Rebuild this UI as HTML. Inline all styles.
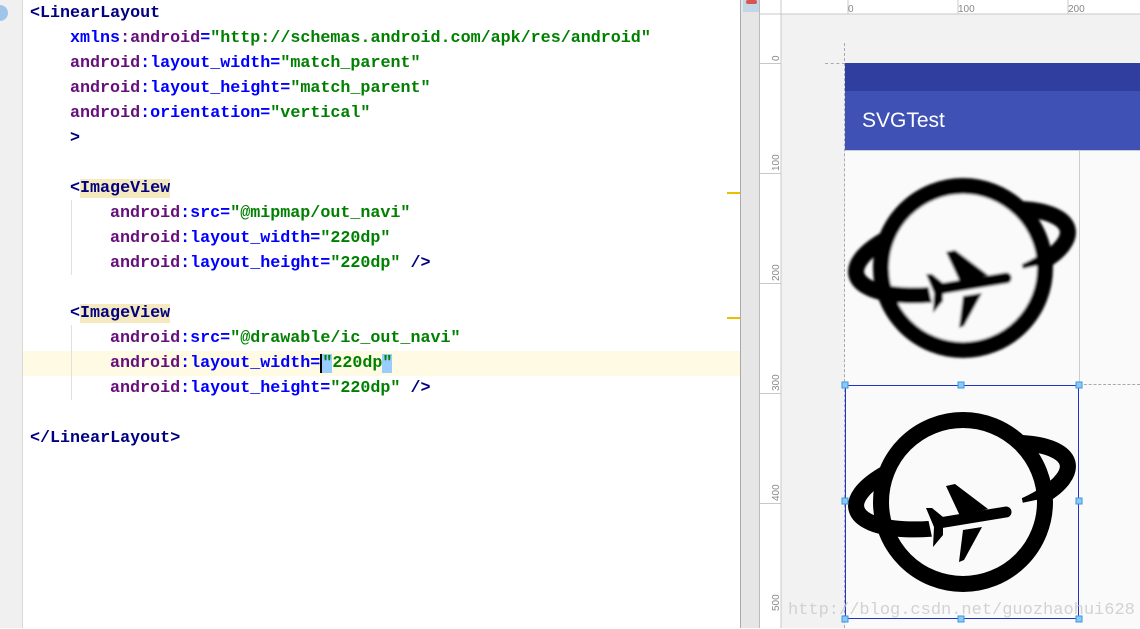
<!DOCTYPE html>
<html><head><meta charset="utf-8"><style>
body{margin:0;width:1140px;height:628px;overflow:hidden;background:#fff;position:relative;font-family:"Liberation Sans",sans-serif}
.gut{position:absolute;left:0;top:0;width:22px;height:628px;background:#f0f0f0;border-right:1px solid #d8d8d8}
.code{position:absolute;left:0;top:0;width:740px;font-family:"Liberation Mono",monospace;font-size:16.7px;font-weight:bold}
.l{position:absolute;height:25px;line-height:25px;white-space:pre}
.t{color:#000080}.p{color:#660e7a}.a{color:#0000ff}.v{color:#008000}
.hl{position:absolute;left:0;top:351px;width:740px;height:25px;background:#fffae3}
.tagbg{background:#f5e9c0}
</style></head><body>
<div class="hl"></div>
<div class="gut"></div>
<div style="position:absolute;left:0;top:5px;width:8px;height:16px;border-radius:0 8px 8px 0;background:#9fc6ea"></div>
<div style="position:absolute;left:71px;top:200px;width:1px;height:75px;background:#e0e0e0"></div>
<div style="position:absolute;left:71px;top:325px;width:1px;height:75px;background:#e0e0e0"></div>
<div class="code">
<div class="l t" style="left:30px;top:1px">&lt;LinearLayout</div>
<div class="l" style="left:70px;top:26px"><span class="a">xmlns</span><span class="p">:android</span><span class="a">=</span><span class="v">"http://schemas.android.com/apk/res/android"</span></div>
<div class="l" style="left:70px;top:51px"><span class="p">android</span><span class="a">:layout_width=</span><span class="v">"match_parent"</span></div>
<div class="l" style="left:70px;top:76px"><span class="p">android</span><span class="a">:layout_height=</span><span class="v">"match_parent"</span></div>
<div class="l" style="left:70px;top:101px"><span class="p">android</span><span class="a">:orientation=</span><span class="v">"vertical"</span></div>
<div class="l t" style="left:70px;top:126px">&gt;</div>
<div class="l t" style="left:70px;top:176px">&lt;<span class="tagbg">ImageView</span></div>
<div class="l" style="left:110px;top:201px"><span class="p">android</span><span class="a">:src=</span><span class="v">"@mipmap/out_navi"</span></div>
<div class="l" style="left:110px;top:226px"><span class="p">android</span><span class="a">:layout_width=</span><span class="v">"220dp"</span></div>
<div class="l" style="left:110px;top:251px"><span class="p">android</span><span class="a">:layout_height=</span><span class="v">"220dp"</span> <span class="t">/&gt;</span></div>
<div class="l t" style="left:70px;top:301px">&lt;<span class="tagbg">ImageView</span></div>
<div class="l" style="left:110px;top:326px"><span class="p">android</span><span class="a">:src=</span><span class="v">"@drawable/ic_out_navi"</span></div>
<div class="l" style="left:110px;top:351px"><span class="p">android</span><span class="a">:layout_width=</span><span class="v"><span style="background:#99ccff;border-left:2px solid #000">"</span>220dp<span style="background:#99ccff">"</span></span></div>
<div class="l" style="left:110px;top:376px"><span class="p">android</span><span class="a">:layout_height=</span><span class="v">"220dp"</span> <span class="t">/&gt;</span></div>
<div class="l t" style="left:30px;top:426px">&lt;/LinearLayout&gt;</div>
</div>
<div style="position:absolute;left:727px;top:192px;width:13px;height:2px;background:#e8c000"></div>
<div style="position:absolute;left:727px;top:317px;width:13px;height:2px;background:#e8c000"></div>
<div style="position:absolute;left:740px;top:0;width:20px;height:628px;background:#e6e6e6;border-left:1px solid #aaa;border-right:1px solid #bbb;box-sizing:border-box"></div>
<div style="position:absolute;left:743px;top:0;width:16px;height:12px;background:#c2d6e8"></div>
<div style="position:absolute;left:746px;top:0;width:11px;height:4px;background:#d9534f;border-radius:2px"></div>
<svg style="position:absolute;left:760px;top:0" width="380" height="628">
<rect x="0" y="0" width="380" height="628" fill="#fff"/>
<rect x="21" y="14" width="359" height="614" fill="#f2f2f2"/>
<g stroke="#c8c8c8" stroke-width="1">
<line x1="21" y1="0" x2="21" y2="628"/>
<line x1="0" y1="14" x2="380" y2="14"/>
<line x1="88" y1="0" x2="88" y2="14"/><line x1="198" y1="0" x2="198" y2="14"/><line x1="308" y1="0" x2="308" y2="14"/>
<line x1="0" y1="63.5" x2="21" y2="63.5"/><line x1="0" y1="173.5" x2="21" y2="173.5"/><line x1="0" y1="283.5" x2="21" y2="283.5"/><line x1="0" y1="393.5" x2="21" y2="393.5"/><line x1="0" y1="503.5" x2="21" y2="503.5"/>
</g>
<g font-size="10" fill="#888" font-family="Liberation Sans">
<text x="88" y="12">0</text><text x="198" y="12">100</text><text x="308" y="12">200</text>
<text transform="translate(19,61) rotate(-90)">0</text>
<text transform="translate(19,171) rotate(-90)">100</text>
<text transform="translate(19,281) rotate(-90)">200</text>
<text transform="translate(19,391) rotate(-90)">300</text>
<text transform="translate(19,501) rotate(-90)">400</text>
<text transform="translate(19,611) rotate(-90)">500</text>
</g>
</svg>
<div style="position:absolute;left:845px;top:63px;width:295px;height:28px;background:#303f9f"></div>
<div style="position:absolute;left:845px;top:91px;width:295px;height:59px;background:#3f51b5;color:#fff;font-size:21px;line-height:59px;padding-left:17px;box-sizing:border-box">SVGTest</div>
<div style="position:absolute;left:845px;top:150px;width:295px;height:478px;background:#fafafa;border-top:1px solid #ccc"></div>
<div style="position:absolute;left:1079px;top:150px;width:1px;height:235px;background:#ccc"></div>
<div style="position:absolute;left:844px;top:43px;width:0;height:585px;border-left:1px dashed #aaa"></div>
<div style="position:absolute;left:825px;top:63px;width:20px;border-top:1px dashed #aaa"></div>
<div style="position:absolute;left:1079px;top:384px;width:61px;border-top:1px dashed #aaa"></div>
<svg style="position:absolute;left:0;top:0" width="1140" height="628">
<defs>
<filter id="bl"><feGaussianBlur stdDeviation="1.2"/></filter>
<clipPath id="cf"><rect x="15" y="100" width="62" height="60"/><rect x="173" y="90" width="50" height="40"/></clipPath>
<g id="ic">
<ellipse cx="117" cy="101" rx="108" ry="38" transform="rotate(-12 117 101)" fill="none" stroke="#000" stroke-width="16"/>
<circle cx="118" cy="117" r="82" fill="#fafafa" stroke="#000" stroke-width="16"/>
<ellipse cx="117" cy="101" rx="108" ry="38" transform="rotate(-12 117 101)" fill="none" stroke="#000" stroke-width="16" clip-path="url(#cf)"/>
<line x1="94" y1="138" x2="161" y2="127" stroke="#000" stroke-width="11" stroke-linecap="round"/>
<polygon points="101,101 110,99 143,124 115,131" fill="#000"/>
<polygon points="118,145 137,142 119,175 114,177" fill="#000"/>
<polygon points="81,123 87,123 98,132 98,150 88,162 89,142" fill="#000"/>
</g>
</defs>
<use href="#ic" x="845" y="385"/>
<g filter="url(#bl)"><use href="#ic" x="845" y="151"/></g>
<rect x="845.5" y="385.5" width="233" height="233" fill="none" stroke="#2233cc" stroke-width="1"/>
<g fill="#8cc8f4" stroke="#3a96e0" stroke-width="1">
<rect x="842" y="382" width="6" height="6"/><rect x="958" y="382" width="6" height="6"/><rect x="1076" y="382" width="6" height="6"/>
<rect x="842" y="498" width="6" height="6"/><rect x="1076" y="498" width="6" height="6"/>
<rect x="842" y="616" width="6" height="6"/><rect x="958" y="616" width="6" height="6"/><rect x="1076" y="616" width="6" height="6"/>
</g>
<text x="788" y="614" font-family="Liberation Mono,monospace" font-size="17" fill="#c8c8c8" fill-opacity="0.8">http://blog.csdn.net/guozhaohui628</text>
</svg>
</body></html>
